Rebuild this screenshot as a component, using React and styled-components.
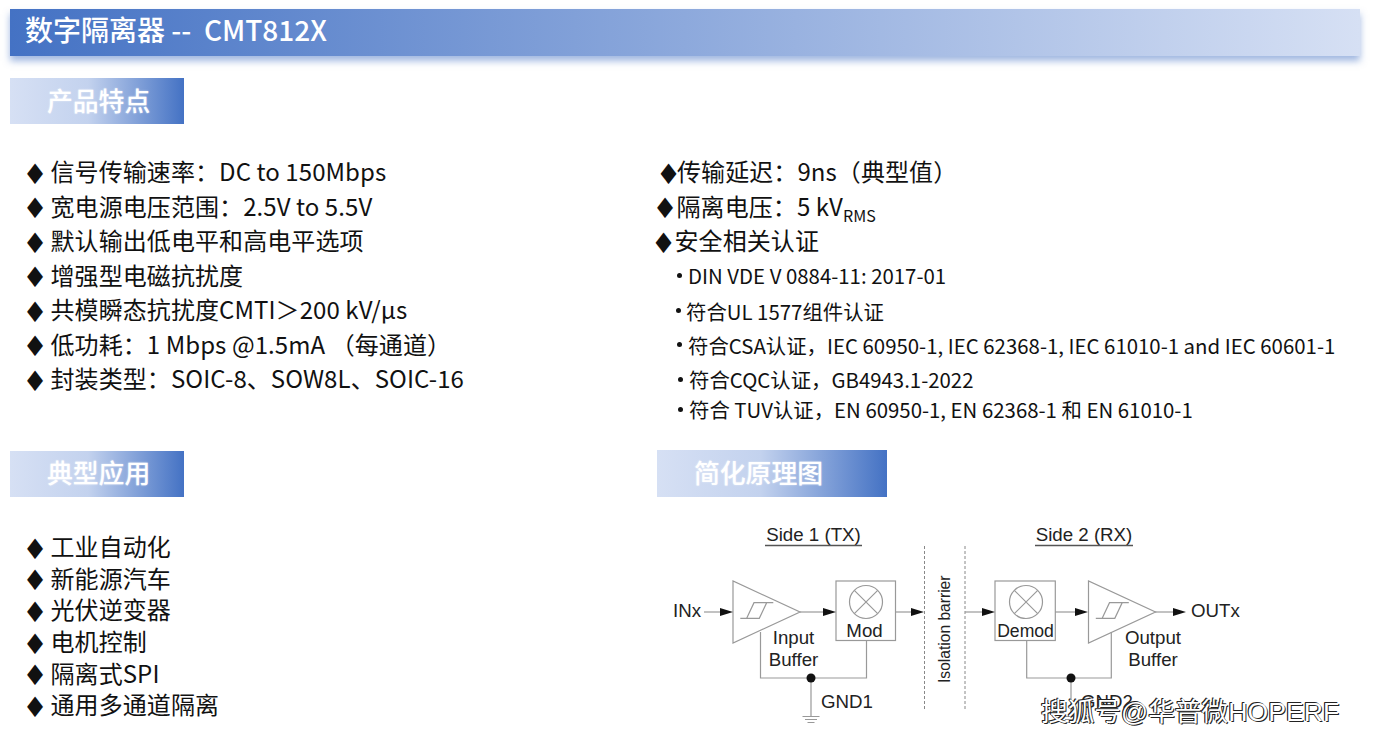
import React from "react";
import styled, { createGlobalStyle } from "styled-components";

const Global = createGlobalStyle`
  html, body { margin: 0; padding: 0; background: #fff; }
  body { font-family: "Noto Sans CJK SC", "Noto Sans", sans-serif; color: #111; }
`;
const Page = styled.div`
  position: relative;
  width: 1373px;
  height: 741px;
  overflow: hidden;
  box-sizing: border-box;
  padding: 9px 13px 0 10px;
`;
const Header = styled.header`
  height: 47px;
  box-sizing: border-box;
  display: flex;
  align-items: center;
  padding: 0 0 7px 15px;
  background: linear-gradient(90deg, #4472c4 0%, #d6e0f4 100%);
  box-shadow: 0 5px 7px rgba(68, 114, 196, 0.5);
  color: #fff;
  font-size: 28px;
  line-height: 1;
  font-weight: 500;
  white-space: pre;
`;
const Grid = styled.div`
  display: grid;
  grid-template-columns: 647px 1fr;
`;
const Tag = styled.div`
  width: ${(p) => p.$w}px;
  height: ${(p) => p.$h || 46}px;
  padding: 0 0 3px 37px;
  box-sizing: border-box;
  display: flex;
  align-items: center;
  background: linear-gradient(90deg, #d6e0f4 0%, #c3d2ee 45%, #4472c4 100%);
  color: #fff;
  font-size: 25.8px;
  line-height: 1;
  font-weight: 500;
  text-shadow: 0 0 2px rgba(255, 255, 255, 0.6);
`;
const Col = styled.section`
  display: flex;
  flex-direction: column;
  padding-top: ${(p) => p.$top || 0}px;
`;
const Rows = styled.ul`
  list-style: none;
  margin: ${(p) => p.$mt}px 0 0;
  padding: 0 0 0 ${(p) => p.$left || 0}px;
`;
const Row = styled.li`
  height: ${(p) => p.$h}px;
  display: flex;
  align-items: center;
  font-size: 24px;
  letter-spacing: 0.08px;
  line-height: 1;
  white-space: pre;
  margin-left: ${(p) => p.$in || 0}px;
`;
const Diamond = styled.span`
  width: ${(p) => p.$w || 28}px;
  font-size: 28px;
  line-height: 1;
  margin-top: 7px;
  flex: none;
  font-family: "DejaVu Sans", sans-serif;
`;
const SubRow = styled.li`
  height: ${(p) => p.$h}px;
  display: flex;
  align-items: center;
  font-size: 20.4px;
  line-height: 1;
  white-space: pre;
  padding-left: ${(p) => p.$in}px;
`;
const Dot = styled.span`
  width: 5px;
  height: 5px;
  border-radius: 50%;
  background: #111;
  margin-right: ${(p) => p.$gap || 6}px;
  flex: none;
`;
const Sub = styled.sub`
  font-size: 16px;
  vertical-align: -6px;
  line-height: 0;
`;
const Diagram = styled.svg`
  display: block;
  margin: 23px 0 0;
  width: 706px;
  height: 224px;
  flex: none;
  font-family: "Liberation Sans", Arial, sans-serif;
  fill: #222;
`;
const Watermark = styled.div`
  position: absolute;
  left: 1041px;
  top: 694px;
  font-size: 26.7px;
  line-height: 36px;
  color: #fff;
  white-space: nowrap;
  font-family: "Liberation Sans", "Noto Sans CJK SC", sans-serif;
  text-shadow: -1px -1px 0 #222, 1px 1px 0 #222, -1px 0 0 #333;
`;

const features = [
  "信号传输速率：DC to 150Mbps",
  "宽电源电压范围：2.5V to 5.5V",
  "默认输出低电平和高电平选项",
  "增强型电磁抗扰度",
  "共模瞬态抗扰度CMTI＞200 kV/µs",
  "低功耗：1 Mbps @1.5mA （每通道）",
  "封装类型：SOIC-8、SOW8L、SOIC-16",
];
const uses = ["工业自动化", "新能源汽车", "光伏逆变器", "电机控制", "隔离式SPI", "通用多通道隔离"];
const certs = [
  { t: "DIN VDE V 0884-11: 2017-01", i: 20, h: 37, g: 6 },
  { t: "符合UL 1577组件认证", i: 19, h: 33.5, g: 5 },
  { t: "符合CSA认证，IEC 60950-1, IEC 62368-1, IEC 61010-1 and IEC 60601-1", i: 20, h: 34.5, g: 6 },
  { t: "符合CQC认证，GB4943.1-2022", i: 21, h: 34.5, g: 6 },
  { t: "符合 TUV认证，EN 60950-1, EN 62368-1 和 EN 61010-1", i: 21, h: 25, g: 6 },
];

const Arrow = ({ x1, x2, y = 612 }) => (
  <>
    <line x1={x1} y1={y} x2={x2 - 8} y2={y} stroke="#999" strokeWidth="1.2" />
    <polygon points={`${x2 - 13},${y - 4} ${x2},${y} ${x2 - 13},${y + 4}`} fill="#111" />
  </>
);
const Hyst = ({ dx }) => (
  <g transform={`translate(${dx} 0)`} fill="none" stroke="#999" strokeWidth="1.2">
    <path d="M740.3 618.3H759.3L766.7 602.7H773.3M746.7 618.3L754 602.7H766.7" />
    <polygon points="733,581 733,643 800,612" />
  </g>
);
const Mixer = ({ cx }) => (
  <g fill="none" stroke="#999" strokeWidth="1.2">
    <circle cx={cx} cy="602" r="16.5" />
    <path d={`M${cx - 11.7} 590.3L${cx + 11.7} 613.7M${cx + 11.7} 590.3L${cx - 11.7} 613.7`} />
  </g>
);
const Ground = ({ x }) => (
  <g stroke="#999" strokeWidth="1.2">
    <path d={`M${x} 678V716M${x - 8.5} 716.5H${x + 8.5}M${x - 6} 719.5H${x + 6}M${x - 3.5} 722.5H${x + 3.5}`} />
  </g>
);

const SchematicDiagram = () => (
  <Diagram viewBox="657 520 706 224" xmlns="http://www.w3.org/2000/svg">
    <g fontSize="18.7">
      <text x="813.5" y="540.5" textAnchor="middle">Side 1 (TX)</text>
      <text x="1084" y="540.5" textAnchor="middle">Side 2 (RX)</text>
      <text x="673" y="617">INx</text>
      <text x="793.5" y="644" textAnchor="middle">Input</text>
      <text x="793.5" y="666" textAnchor="middle">Buffer</text>
      <text x="864.5" y="637" textAnchor="middle">Mod</text>
      <text x="1025.5" y="637" textAnchor="middle" fontSize="17.6">Demod</text>
      <text x="821" y="708">GND1</text>
      <text x="1081" y="708">GND2</text>
      <text x="1153" y="644" textAnchor="middle">Output</text>
      <text x="1153" y="666" textAnchor="middle">Buffer</text>
      <text x="1191" y="617">OUTx</text>
      <text transform="translate(950 683) rotate(-90)" fontSize="15.6">Isolation barrier</text>
    </g>
    <path d="M765 545.5H862M1035 545.5H1133" stroke="#555" strokeWidth="1.6" fill="none" />
    <path d="M924.5 546V710M965 546V710" stroke="#888" strokeWidth="1" strokeDasharray="3 2" fill="none" />
    <Hyst dx={0} />
    <Hyst dx={355.5} />
    <rect x="836" y="581" width="59.5" height="59.5" fill="none" stroke="#999" strokeWidth="1.2" />
    <rect x="995" y="581" width="60.3" height="59.5" fill="none" stroke="#999" strokeWidth="1.2" />
    <Mixer cx={866} />
    <Mixer cx={1026} />
    <Arrow x1={704} x2={733} />
    <Arrow x1={800} x2={836} />
    <Arrow x1={895.5} x2={924} />
    <Arrow x1={965} x2={995} />
    <Arrow x1={1055} x2={1088} />
    <Arrow x1={1155} x2={1186} />
    <path d="M760.5 632V678H866.5V640.5M1026.7 640.5V678H1111.3V632" fill="none" stroke="#999" strokeWidth="1.2" />
    <Ground x={811} />
    <Ground x={1071} />
    <circle cx="811" cy="678" r="4.5" fill="#111" />
    <circle cx="1071" cy="678" r="4.5" fill="#111" />
  </Diagram>
);

export default function App() {
  return (
    <Page>
      <Global />
      <Header>数字隔离器 --  CMT812X</Header>
      <Grid>
        <Col $top={22}>
          <Tag $w={174}>产品特点</Tag>
          <Rows $mt={30} $left={12.5}>
            {features.map((t) => (
              <Row key={t} $h={34.5}><Diamond>♦</Diamond>{t}</Row>
            ))}
          </Rows>
        </Col>
        <Col $top={98}>
          <Rows $mt={0} $left={0}>
            <Row $h={34.5} $in={-1}><Diamond $w={21}>♦</Diamond>传输延迟：9ns（典型值）</Row>
            <Row $h={34.5} $in={-4.5}><Diamond $w={24}>♦</Diamond><span>隔离电压：5 kV<Sub>RMS</Sub></span></Row>
            <Row $h={34} $in={-6}><Diamond $w={23.5}>♦</Diamond>安全相关认证</Row>
            {certs.map((c) => (
              <SubRow key={c.t} $h={c.h} $in={c.i}><Dot $gap={c.g} />{c.t}</SubRow>
            ))}
          </Rows>
        </Col>
      </Grid>
      <Grid>
        <Col $top={29}>
          <Tag $w={174}>典型应用</Tag>
          <Rows $mt={34} $left={12.5}>
            {uses.map((t) => (
              <Row key={t} $h={31.6}><Diamond>♦</Diamond>{t}</Row>
            ))}
          </Rows>
        </Col>
        <Col $top={28}>
          <Tag $w={230} $h={47}>简化原理图</Tag>
          <SchematicDiagram />
        </Col>
      </Grid>
      <Watermark>搜狐号@华普微HOPERF</Watermark>
    </Page>
  );
}
